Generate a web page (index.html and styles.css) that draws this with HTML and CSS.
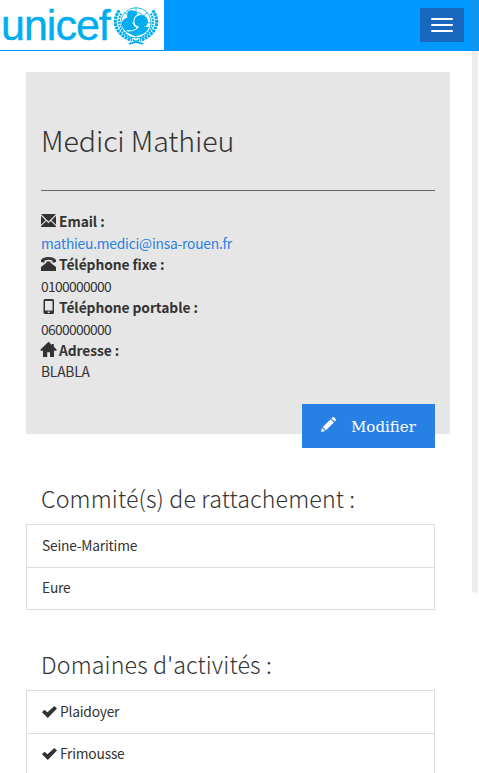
FILE: index.html
```
<!DOCTYPE html>
<html lang="fr">
<head>
<meta charset="utf-8">
<title>Medici Mathieu</title>
<link rel="stylesheet" href="styles.css">
</head>
<body>
<svg class="defs" width="0" height="0">
  <symbol id="check" viewBox="0 0 15 15"><path d="M0 8.300 2.400 5.800 5.500 8.300 12.400 2 15 4.500 5.800 14Z"/></symbol>
</svg>
<header class="navbar">
  <a class="brand" href="#">
    <span class="brand-name">unicef</span>
    <svg class="emblem" viewBox="0 0 44 40" fill="none" stroke="#00aeef">
      <g stroke-width=".8">
        <circle cx="22" cy="17" r="14.500"/>
        <circle cx="22" cy="17" r="10"/>
        <path d="M22 2v30M7 17h30M11 7l22 20M33 7 11 27"/>
      </g>
      <path stroke-width="3" stroke-dasharray="2.600 .7" d="M6 5C-1 15 1 27 18 34M38 5c7 10 5 22-12 29"/>
      <path stroke-width="1.800" stroke-dasharray="2 .8" d="M8 8C3 17 6 27 19 32M36 8c5 9 2 19-11 24"/>
      <path stroke-width="1.600" d="M15 37q7-1 10-4M29 37q-7-1-10-4"/>
      <path fill="#00aeef" stroke="none" d="M8 18q1-5 6-6-2-7 4-7 6 0 5 6l-2 5-3 1 3 4 4 2v6q-14 0-17-11Z"/>
      <path fill="#00aeef" stroke="none" d="M20.500 16q0-6.500 6.500-6.500 6.500 1 6.500 6.500-1 4-4 5h5q-3 8.500-14.500 8.500l-6-4.500q8 1 10.500-4-4-1-4-5Z"/>
      <path stroke="#fff" stroke-width="1" d="M13 24.500q8 1 11-3.500-4-1-4-5 0-5 4-6.500"/>
    </svg>
  </a>
  <button class="toggle" aria-label="Menu"><span></span><span></span><span></span></button>
</header>
<main class="container">
  <section class="card">
    <h1>Medici Mathieu</h1>
    <hr>
    <dl>
      <dt><svg class="icon" viewBox="0 0 15 15"><path d="M0 1h15L7.500 8.500ZM0 2.800 4.500 7.300 0 11.800ZM15 2.800v9L10.500 7.300ZM5.200 8l2.300 2.300L9.800 8 15 13.200v.8H0v-.8Z"/></svg>Email :</dt>
      <dd><a href="#">mathieu.medici@insa-rouen.fr</a></dd>
      <dt><svg class="icon" viewBox="0 0 15 15"><path d="M0 6V4Q2 1 7.500 1T15 4v2l-3.500.8V4.500Q7.500 3 3.500 4.500v2.300ZM5.500 5.500h4v1.200L15 11v4H0v-4l5.500-4.300Z"/></svg>Téléphone fixe :</dt>
      <dd class="number">0100000000</dd>
      <dt><svg class="icon" viewBox="0 0 15 15"><path fill-rule="evenodd" d="M4 0h7.500q1.500 0 1.500 1.500v12q0 1.500-1.500 1.500H4q-1.500 0-1.500-1.500v-12Q2.500 0 4 0ZM4 2v9.500h7.500V2ZM6.800 12.600v1.300h1.800v-1.300Z"/></svg>Téléphone portable :</dt>
      <dd class="number">0600000000</dd>
      <dt><svg class="icon" viewBox="0 0 15 15"><path d="M7.500-.2 11 3V2h1.800v2.700L15.500 7.500v1.300H13V15H9v-4.800H6.200V15H2V8.800H-.5V7.500Z"/></svg>Adresse :</dt>
      <dd class="last">BLABLA</dd>
    </dl>
    <button class="edit"><svg class="pencil" viewBox="0 0 15 15"><path d="M0 15 1 10.800 4.200 14ZM1.800 10 9.600 2.200 12.800 5.400 5 13.200ZM10.400 1.400 11.500.3q.8-.6 1.600 0l1.600 1.600q.6.800 0 1.600l-1.100 1.100Z"/></svg><span>Modifier</span></button>
  </section>
  <section class="group">
    <h2 class="committee">Commité(s) de rattachement :</h2>
    <ul><li>Seine-Maritime</li><li>Eure</li></ul>
  </section>
  <section class="group">
    <h2 class="domains">Domaines d'activités :</h2>
    <ul>
      <li><svg class="icon"><use href="#check"/></svg>Plaidoyer</li>
      <li><svg class="icon"><use href="#check"/></svg>Frimousse</li>
    </ul>
  </section>
</main>
<div class="scroll-thumb"></div>
</body>
</html>
```
FILE: styles.css
```
* { box-sizing: border-box; }
html, body { height: 100%; overflow: hidden; }
body {
  margin: 0;
  background: #fff;
  color: #333;
  font: 13.8px/21.43px "Noto Sans CJK SC", "Noto Sans", sans-serif;
  letter-spacing: -.22px;
}
.defs { position: absolute; }
.navbar {
  display: flex;
  justify-content: space-between;
  align-items: flex-start;
  height: 51px;
  background: #09f;
  border-bottom: 1px solid #09f;
}
.brand {
  display: flex;
  width: 164px;
  height: 50px;
  background: #fff;
  color: #00aeef;
  text-decoration: none;
}
.brand-name {
  width: 113px;
  padding-left: 1px;
  font: 43px/50px "Liberation Sans", sans-serif;
  letter-spacing: -1px;
  -webkit-text-stroke: .4px #00aeef;
}
.emblem { flex: none; width: 46px; height: 42px; margin-top: 5px; }
.toggle {
  display: flex;
  flex-direction: column;
  gap: 4px;
  width: 44px;
  height: 34px;
  margin: 8px 15px 0 0;
  padding: 10px 11px;
  border: 0;
  background: #1967be;
}
.toggle span { width: 22px; height: 2px; border-radius: 1px; background: #fff; }
.container { padding: 21px 29px 0 26px; }
.card {
  display: flex;
  flex-direction: column;
  height: 362px;
  padding: 48px 15px 0;
  background: #e6e6e6;
}
.card h1 { margin: 0; font-size: 28.6px; line-height: 40px; font-weight: 300; letter-spacing: -.1px; }
hr { width: 100%; margin: 30px 0 20px; border: 0; border-top: 1px solid #666; }
dl, dd { margin: 0; }
dt { height: 21.43px; font-weight: 700; letter-spacing: -.07px; }
dd { height: 21.43px; padding-top: 1px; }
dd.last { padding-top: 0; }
dd a { color: #2780e3; text-decoration: none; }
.number { letter-spacing: -.66px; }
.icon { width: 15px; height: 15px; margin-right: 3px; vertical-align: -1px; fill: #333; overflow: visible; }
li .icon { vertical-align: -2px; }
.edit {
  display: flex;
  align-items: center;
  align-self: flex-end;
  flex: none;
  width: 133px;
  height: 44px;
  margin-top: 21.56px;
  padding: 0 0 0 19px;
  border: 0;
  background: #2780e3;
  color: #fff;
  font: 15px/21px "DejaVu Serif", serif;
}
.edit span { padding-top: 3px; }
.pencil { width: 15px; height: 15px; margin: -2px 15px 0 0; fill: #fff; }
.group { margin-right: 15px; }
.group h2 { margin: 0; padding: 0 15px; font-size: 23.2px; line-height: 30px; font-weight: 300; letter-spacing: .14px; white-space: nowrap; }
.group .committee { padding-top: 49px; padding-bottom: 11px; }
.group .domains { padding-top: 39px; padding-bottom: 11px; }
ul { margin: 0; padding: 0; list-style: none; border: 1px solid #ddd; }
li { height: 42px; padding: 10px 15px; }
li + li { padding-top: 9px; border-top: 1px solid #ddd; }
.scroll-thumb {
  position: fixed;
  top: 0;
  right: 1px;
  width: 6px;
  height: 593px;
  border-radius: 3px;
  background: rgba(128, 128, 128, .15);
}
```
